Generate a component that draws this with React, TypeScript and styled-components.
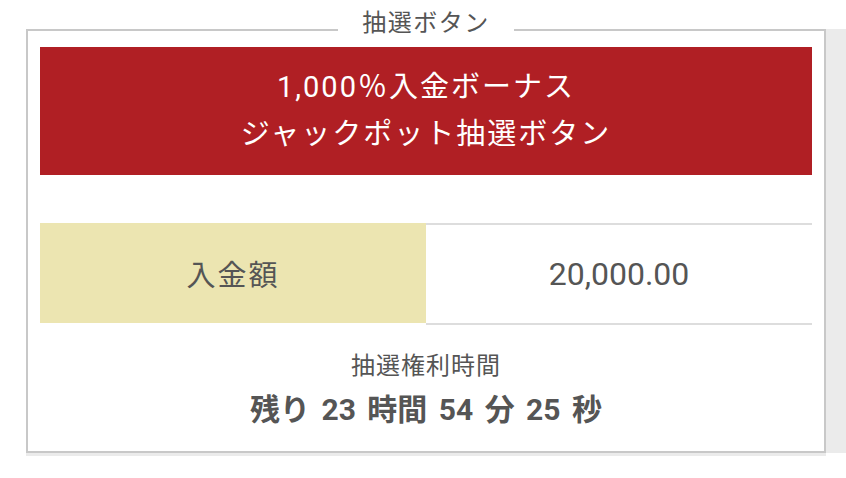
import React from "react";
import styled, { createGlobalStyle } from "styled-components";

const GlobalStyle = createGlobalStyle`
  html, body {
    margin: 0;
    padding: 0;
    background: #fff;
  }

  body {
    font-family: Roboto, "Noto Sans CJK JP", sans-serif;
    color: #555;
  }
`;

export default function App() {
  return (
    <>
      <GlobalStyle />
      <Page>
        <Panel>
          <Legend>抽選ボタン</Legend>
          <Banner>
            <span>1,000％入金ボーナス</span>
            <span>ジャックポット抽選ボタン</span>
          </Banner>
          <AmountRow>
            <LabelCell>入金額</LabelCell>
            <ValueCell>20,000.00</ValueCell>
          </AmountRow>
          <Countdown>
            <CountdownLabel>抽選権利時間</CountdownLabel>
            <CountdownTime>残り 23 時間 54 分 25 秒</CountdownTime>
          </Countdown>
        </Panel>
      </Page>
    </>
  );
}

const Page = styled.div`
  width: 846px;
  height: 478px;
  box-sizing: border-box;
  padding: 13px 0 0 26px;
  overflow: hidden;
`;

const Panel = styled.fieldset`
  width: 800px;
  box-sizing: border-box;
  margin: 0;
  padding: 0 12px 21px;
  border: 2px solid #c8c8c8;
  background: #fff;
  box-shadow: 20px 0 0 #ebebeb, 0 3px 0 #ebebeb;
  min-inline-size: auto;
`;

const Legend = styled.legend`
  margin: 0 auto;
  padding: 0 24px 14px;
  font-size: 24px;
  line-height: 20px;
  letter-spacing: 1.5px;
  color: #555;
`;

const Banner = styled.div`
  height: 128px;
  display: flex;
  flex-direction: column;
  align-items: center;
  justify-content: center;
  background: #b01f24;
  color: #fff;
  font-size: 29px;
  line-height: 47px;
  letter-spacing: 2px;
  margin-bottom: 48px;
`;

const AmountRow = styled.div`
  display: grid;
  grid-template-columns: 1fr 1fr;
  align-items: start;
`;

const LabelCell = styled.div`
  height: 100px;
  display: flex;
  align-items: center;
  justify-content: center;
  background: #ece5b1;
  font-size: 29px;
  letter-spacing: 2px;
`;

const ValueCell = styled.div`
  height: 102px;
  box-sizing: border-box;
  display: flex;
  align-items: center;
  justify-content: center;
  border-top: 2px solid #dddddd;
  border-bottom: 2px solid #dddddd;
  font-size: 32px;
`;

const Countdown = styled.div`
  display: flex;
  flex-direction: column;
  align-items: center;
  padding-top: 26px;
`;

const CountdownLabel = styled.div`
  font-size: 24px;
  line-height: 30px;
  letter-spacing: 1px;
`;

const CountdownTime = styled.div`
  margin-top: 9px;
  font-size: 30px;
  line-height: 40px;
  font-weight: bold;
  word-spacing: 4px;
`;
